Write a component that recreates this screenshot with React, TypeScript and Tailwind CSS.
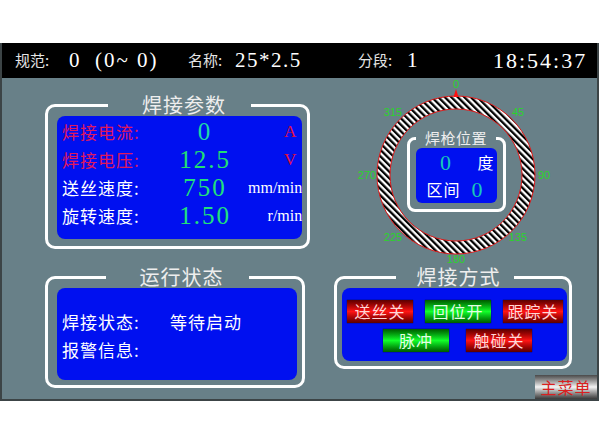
import React from 'react';

const cjk = "font-['Noto_Sans_CJK_SC',sans-serif]";
const serif = "font-['Liberation_Serif',serif]";

type Param = {
  label: string;
  labelColor: string;
  value: string;
  valueColor: string;
  unit: string;
  unitClass: string;
};

const params: Param[] = [
  { label: '焊接电流:', labelColor: 'text-[#e0185c]', value: '0', valueColor: 'text-[#1fd8a8]', unit: 'A', unitClass: 'text-[#e01040] text-[17px] pr-[6px]' },
  { label: '焊接电压:', labelColor: 'text-[#e0185c]', value: '12.5', valueColor: 'text-[#22e070]', unit: 'V', unitClass: 'text-[#e01040] text-[17px] pr-[6px]' },
  { label: '送丝速度:', labelColor: 'text-white', value: '750', valueColor: 'text-[#22e07a]', unit: 'mm/min', unitClass: 'text-white text-[16px]' },
  { label: '旋转速度:', labelColor: 'text-white', value: '1.50', valueColor: 'text-[#22e07a]', unit: 'r/min', unitClass: 'text-white text-[16px]' },
];

const ringLabels = [
  { t: '0', cls: 'left-[79px] top-[-12px]' },
  { t: '45', cls: 'left-[141px] top-[16px]' },
  { t: '90', cls: 'left-[167px] top-[79px]' },
  { t: '135', cls: 'left-[141px] top-[141px]' },
  { t: '180', cls: 'left-[79px] top-[163px]' },
  { t: '225', cls: 'left-[16px] top-[141px]' },
  { t: '270', cls: 'left-[-10px] top-[79px]' },
  { t: '315', cls: 'left-[16px] top-[16px]' },
];

const red = 'bg-linear-to-b from-[#5c0000] via-[#ff1414] to-[#5c0000] text-[#ffd6d6]';
const green = 'bg-linear-to-b from-[#005a00] via-[#12ff2a] to-[#005a00] text-[#e4ffe4]';

function Btn({ label, tone, w = 'w-[66px]' }: { label: string; tone: string; w?: string }) {
  return (
    <div className={`${w} h-[23px] ${tone} ${cjk} text-[16px] leading-[23px] tracking-[1px] text-center shadow-[0_0_1px_#000]`}>
      {label}
    </div>
  );
}

export default function App() {
  return (
    <div className="w-[600px] h-[446px] bg-white overflow-hidden">
      <div className="mt-[43px] w-[599px] h-[358px] flex flex-col border-x-2 border-b-2 border-[#3c4446]">
        {/* header */}
        <div className="h-[35px] bg-black flex items-center pl-[13px] text-white">
          <span className={`w-[54px] shrink-0 ${cjk} text-[15px] text-[#e4e4e4]`}>规范:</span>
          <span className={`w-[26px] shrink-0 ${serif} text-[21px]`}>0</span>
          <span className={`w-[93px] shrink-0 ${serif} text-[21px] tracking-[2px]`}>(0~ 0)</span>
          <span className={`w-[47px] shrink-0 ${cjk} text-[15px] text-[#e4e4e4]`}>名称:</span>
          <span className={`w-[123px] shrink-0 ${serif} text-[21px] tracking-[1.5px]`}>25*2.5</span>
          <span className={`w-[49px] shrink-0 ${cjk} text-[15px] text-[#e4e4e4]`}>分段:</span>
          <span className={`w-[86px] shrink-0 ${serif} text-[21px]`}>1</span>
          <span className={`${serif} text-[22px] tracking-[2px]`}>18:54:37</span>
        </div>

        {/* body */}
        <div className="flex-1 bg-[#688088] flex">
          {/* left column */}
          <div className="ml-[43px] w-[260px] flex flex-col">
            <fieldset className="mt-[16px] border-[3px] border-white rounded-[10px] pl-[9px] pr-[5px] pb-[7px]">
              <legend className={`mx-auto pl-[34px] pr-[25px] ${cjk} text-[20px] leading-[22px] tracking-[1px] text-[#eeeeee]`}>焊接参数</legend>
              <div className="h-[123px] bg-[#0010f0] rounded-[8px] pt-[2px] pl-[5px] pr-0">
                {params.map((p) => (
                  <div key={p.label} className="h-[28px] flex items-center">
                    <span className={`w-[100px] ${cjk} text-[17px] tracking-[1px] ${p.labelColor}`}>{p.label}</span>
                    <span className={`w-[86px] text-center ${serif} text-[25px] tracking-[2px] ${p.valueColor}`}>{p.value}</span>
                    <span className={`flex-1 text-right ${serif} ${p.unitClass}`}>{p.unit}</span>
                  </div>
                ))}
              </div>
            </fieldset>

            <fieldset className="mt-[17px] border-[3px] border-white rounded-[10px] pl-[9px] pr-[5px] pb-[5px]">
              <legend className={`mx-auto pl-[34px] pr-[25px] ${cjk} text-[20px] leading-[22px] tracking-[1px] text-[#eeeeee]`}>运行状态</legend>
              <div className={`h-[92px] bg-[#0010f0] rounded-[8px] pt-[20px] pl-[5px] ${cjk} text-[17px] tracking-[1px] text-white`}>
                <div className="h-[28px] flex items-center">
                  <span className="w-[108px]">焊接状态:</span>
                  <span>等待启动</span>
                </div>
                <div className="h-[28px] flex items-center">
                  <span>报警信息:</span>
                </div>
              </div>
            </fieldset>
          </div>

          {/* right column */}
          <div className="ml-[29px] w-[263px] flex flex-col">
            <div className="relative mt-[18px] ml-[43px] w-[158px] h-[158px]">
              <svg width="158" height="158" className="absolute inset-0 overflow-visible">
                <defs>
                  <pattern id="hatch" width="4.6" height="4.6" patternUnits="userSpaceOnUse" patternTransform="rotate(-45)">
                    <rect width="4.6" height="4.6" fill="#ffffff" />
                    <rect width="2.3" height="4.6" fill="#000000" />
                  </pattern>
                </defs>
                <circle cx="79" cy="79" r="72.5" fill="none" stroke="url(#hatch)" strokeWidth="13" />
                <circle cx="79" cy="79" r="79" fill="none" stroke="#e01818" strokeWidth="1" />
                <circle cx="79" cy="79" r="66" fill="none" stroke="#e01818" strokeWidth="1" />
                <polygon points="76.5,1 81.5,1 79,-7" fill="#ff1010" />
              </svg>
              {ringLabels.map((l) => (
                <span
                  key={l.t}
                  className={`absolute ${l.cls} -translate-x-1/2 -translate-y-1/2 font-['Liberation_Sans',sans-serif] text-[11px] leading-none text-[#2ad42a]`}
                >
                  {l.t}
                </span>
              ))}
              <div className="relative pt-[32px] flex justify-center">
                <fieldset className="w-[99px] border-[3px] border-white rounded-[8px] px-[6px] pb-[6px]">
                  <legend className={`mx-auto px-[9px] ${cjk} text-[15px] leading-[20px] tracking-[0.5px] text-[#eeeeee]`}>焊枪位置</legend>
                  <div className={`h-[55px] bg-[#0010f0] rounded-[6px] ${cjk} text-[16px] text-white flex flex-col justify-center`}>
                    <div className="h-[27px] flex items-center">
                      <span className={`w-[60px] text-center ${serif} text-[22px] text-[#18c8b8]`}>0</span>
                      <span className="w-[20px] text-center">度</span>
                    </div>
                    <div className="h-[27px] flex items-center">
                      <span className="w-[56px] text-center tracking-[1px]">区间</span>
                      <span className={`w-[10px] text-center ${serif} text-[22px] text-[#18c8b8]`}>0</span>
                    </div>
                  </div>
                </fieldset>
              </div>
            </div>

            <fieldset className="mt-[12px] w-[238px] border-[3px] border-white rounded-[10px] pl-[5px] pr-[2px] pb-[5px]">
              <legend className={`mx-auto pl-[21px] pr-[13px] ${cjk} text-[20px] leading-[22px] tracking-[1px] text-[#eeeeee]`}>焊接方式</legend>
              <div className="h-[73px] bg-[#0010f0] rounded-[8px] pt-[12px] flex flex-col gap-[6px]">
                <div className="flex pl-[5px] gap-[12px]">
                  <Btn label="送丝关" tone={red} />
                  <Btn label="回位开" tone={green} />
                  <Btn label="跟踪关" tone={red} w="w-[60px]" />
                </div>
                <div className="flex pl-[41px] gap-[17px]">
                  <Btn label="脉冲" tone={green} />
                  <Btn label="触碰关" tone={red} />
                </div>
              </div>
            </fieldset>

            <div className="mt-auto self-end w-[62px] h-[24px] bg-linear-to-b from-[#4a4a4a] via-[#f4f4f4] to-[#3a3a3a] flex items-center justify-center">
              <span className={`${cjk} text-[16px] leading-none tracking-[1px] text-[#d82020]`}>主菜单</span>
            </div>
          </div>
        </div>
      </div>
    </div>
  );
}
